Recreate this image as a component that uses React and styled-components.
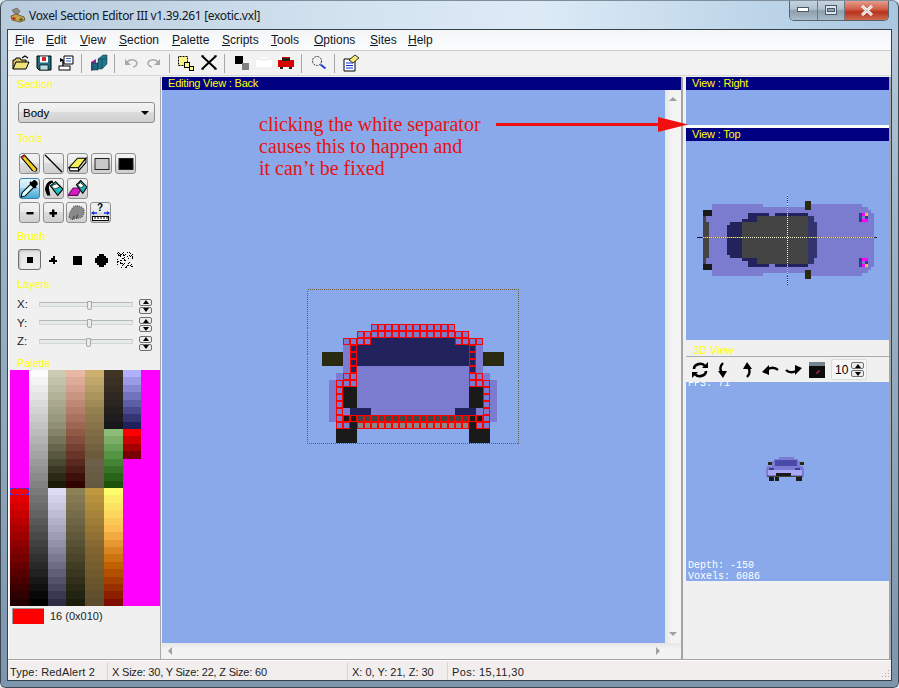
import React from 'react'
import styled, { createGlobalStyle } from 'styled-components'

const UI_FONT = '"Liberation Sans", Arial, sans-serif'

const GlobalStyle = createGlobalStyle`
html, body {
  margin: 0;
  padding: 0;
  background: #dfe6ec;
}
* { box-sizing: border-box; }
`

const Window = styled.div`
position: relative;
width: 899px;
height: 688px;
overflow: hidden;
display: flex;
flex-direction: column;
padding: 0 6px 6px 6px;
border-radius: 7px 7px 6px 6px;
border: 1px solid #3c4852;
border-top-color: #7f8e9b;
background: linear-gradient(90deg, #b7cbdd 0%, #d4e3f0 40%, #dcebf6 60%, #a9c7e0 100%);
font-family: ${UI_FONT};
font-size: 11.5px;
color: #000;
&::after {
  content: '';
  position: absolute;
  left: 0;
  right: 0;
  top: 29px;
  bottom: 0;
  background: linear-gradient(180deg, #b4c8da 0%, #9db4c8 30%, #7d95ad 100%);
  z-index: 0;
}
`

const TitleBar = styled.div`
position: relative;
z-index: 1;
height: 28px;
flex: none;
display: flex;
align-items: center;
padding-left: 3px;
gap: 3px;
`

const TitleText = styled.div`
font-family: "Noto Sans", "Open Sans", sans-serif;
font-size: 12px;
letter-spacing: -0.32px;
color: #10171e;
padding-top: 1px;
`

const WindowControls = styled.div`
position: absolute;
right: 3px;
top: -1px;
width: 100px;
height: 21px;
display: flex;
border: 1px solid #57646f;
border-top: 0;
border-radius: 0 0 5px 5px;
overflow: hidden;
`

const ControlButton = styled.div`
flex: ${p => (p.$close ? '0 0 44px' : '1')};
display: flex;
align-items: center;
justify-content: center;
border-left: ${p => (p.$first ? '0' : '1px solid #6c7a86')};
background: ${p =>
  p.$close
    ? 'linear-gradient(180deg, #e5a494 0%, #d3604a 45%, #b8321c 60%, #cf6a50 100%)'
    : 'linear-gradient(180deg, #c8d6e2 0%, #b0c0ce 45%, #8d9eac 55%, #a9bccb 100%)'};
`

const Client = styled.div`
position: relative;
z-index: 1;
flex: 1;
min-height: 0;
display: flex;
flex-direction: column;
background: #f0f0f0;
border: 1px solid #34404a;
`

const MenuBar = styled.div`
height: 21px;
flex: none;
display: flex;
align-items: center;
padding-left: 7px;
background: linear-gradient(180deg, #f4f5f7, #fbfcfd);
border-bottom: 1px solid #c9cbce;
font-size: 12px;
`

const MenuItem = styled.span`
width: ${p => p.$w}px;
flex: none;
color: #10171e;
white-space: nowrap;
u { text-underline-offset: 1px; }
`

const ToolBar = styled.div`
height: 25px;
flex: none;
display: flex;
align-items: center;
padding-left: 2px;
background: #f2f2f2;
border-bottom: 1px solid #d6d6d6;
`

const ToolIcon = styled.div`
width: 22.5px;
height: 20px;
display: flex;
align-items: center;
justify-content: center;
`

const ToolSep = styled.div`
width: 1px;
height: 19px;
margin: 0 5.5px 0 3.5px;
background: #a6a6a6;
`

const Workspace = styled.div`
flex: 1;
min-height: 0;
display: flex;
padding-top: 1px;
background: #f0f0f0;
border-bottom: 1px solid #a4a4a4;
`

const LeftPanel = styled.div`
width: 153px;
flex: none;
padding-left: 0;
border-left: 1px solid #fff;
border-right: 1px solid #a8a8a8;
display: flex;
flex-direction: column;
`

const Group = styled.div`
padding-left: 8px;
display: flex;
flex-direction: column;
`

const YellowLabel = styled.div`
height: 14px;
line-height: 14px;
color: #ffff00;
font-size: 11px;
letter-spacing: -0.1px;
margin-top: ${p => p.$mt || 0}px;
`

const SelectBox = styled.div`
width: 137px;
height: 21px;
margin: 11px 0 0 1px;
padding: 0 5px 0 4px;
display: flex;
align-items: center;
justify-content: space-between;
font-size: 11.5px;
border: 1px solid #8d8d8d;
border-radius: 3px;
background: linear-gradient(180deg, #f3f3f3 0%, #ebebeb 45%, #dcdcdc 50%, #cfcfcf 100%);
&::after {
  content: '';
  border-left: 4px solid transparent;
  border-right: 4px solid transparent;
  border-top: 4px solid #000;
}
`

const ToolGrid = styled.div`
margin: 8px 0 0 2px;
display: flex;
flex-direction: column;
gap: 3.5px;
`

const ToolRow = styled.div`
display: flex;
gap: ${p => p.$gap ?? 3}px;
`

const ToolButton = styled.div`
width: 21px;
height: 21px;
flex: none;
display: flex;
align-items: center;
justify-content: center;
border: 1px solid ${p => (p.$active ? '#3c7fb1' : '#8e8f8f')};
border-radius: 3px;
background: ${p =>
  p.$active
    ? 'linear-gradient(180deg, #e5f4fc 0%, #c4e5f6 45%, #98d1ef 50%, #3fa9cf 100%)'
    : 'linear-gradient(180deg, #f2f2f2 0%, #ebebeb 45%, #dddddd 50%, #cfcfcf 100%)'};
`

const BrushRow = styled.div`
display: flex;
align-items: center;
margin: 6px 0 0 1px;
`

const BrushItem = styled.div`
width: ${p => (p.$active ? 23 : 24)}px;
height: 21px;
display: flex;
align-items: center;
justify-content: center;
border-radius: 3px;
${p =>
  p.$active &&
  `border: 1px solid #707070;
   background: linear-gradient(180deg, #e4e4e4, #f0f0f0);
   box-shadow: inset 1px 1px 2px #bbb;`}
`

const SliderList = styled.div`
margin-top: 4px;
display: flex;
flex-direction: column;
`

const SliderRow = styled.div`
height: 18.5px;
display: flex;
align-items: center;
font-size: 11.5px;
`

const AxisName = styled.span`
width: 22px;
flex: none;
color: #222;
`

const SliderTrack = styled.div`
position: relative;
width: 94px;
height: 5px;
flex: none;
background: #e7eaea;
border: 1px solid #d0d4d4;
border-top-color: #b4b8b8;
margin-right: 6px;
`

const SliderThumb = styled.div`
position: absolute;
left: ${p => p.$at}px;
top: -2px;
width: 5px;
height: 9px;
background: #ececec;
border: 1px solid #a8a8a8;
border-radius: 1px 1px 3px 3px;
`

const Spin = styled.div`
width: 13px;
flex: none;
display: flex;
flex-direction: column;
gap: 1px;
margin-top: ${p => p.$mt || 0}px;
`

const SpinPart = styled.div`
height: 7px;
border: 1px solid #707070;
border-radius: 2px;
background: #ececec;
display: flex;
align-items: center;
justify-content: center;
&::after {
  content: '';
  border-left: 3.5px solid transparent;
  border-right: 3.5px solid transparent;
  ${p => (p.$down ? 'border-top: 4px solid #000;' : 'border-bottom: 4px solid #000;')}
}
`

const Palette = styled.div`
width: 150px;
height: 236px;
flex: none;
margin-left: 1px;
display: grid;
grid-template-rows: repeat(32, 1fr);
grid-template-columns: repeat(8, 1fr);
grid-auto-flow: column;
`

const PaletteCell = styled.div`
outline: ${p => (p.$picked ? '1px dashed #3a3aff' : 'none')};
outline-offset: -1px;
`

const ColourRow = styled.div`
display: flex;
align-items: center;
gap: 6px;
margin: 2px 0 0 3px;
font-size: 11px;
color: #222;
`

const Swatch = styled.div`
width: 32px;
height: 16px;
background: #ff0000;
border-top: 1px solid #999;
border-left: 1px solid #999;
`

const EditorPane = styled.div`
width: 521px;
flex: none;
margin-left: 1px;
display: flex;
flex-direction: column;
border-right: 2px solid #a4a4a4;
`

const ViewHeader = styled.div`
height: 13px;
flex: none;
line-height: 13px;
padding-left: 6px;
background: #000080;
color: #ffff00;
font-size: 11px;
letter-spacing: -0.2px;
`

const EditorBody = styled.div`
flex: 1;
min-height: 0;
display: flex;
`

const EditorCanvas = styled.div`
flex: 1;
display: flex;
align-items: center;
justify-content: center;
padding-right: 1px;
background: #8aa9ea;
`

const VScroll = styled.div`
width: 16px;
flex: none;
display: flex;
flex-direction: column;
justify-content: space-between;
align-items: center;
padding: 7px 0;
background: linear-gradient(90deg, #e6e6e6, #f3f3f3 40%, #f3f3f3);
`

const HScroll = styled.div`
height: 16px;
flex: none;
display: flex;
justify-content: space-between;
align-items: center;
padding: 0 21px 0 6px;
background: linear-gradient(180deg, #e6e6e6, #f3f3f3 40%, #f3f3f3);
`

const Arrow = styled.div`
width: 0;
height: 0;
${p =>
  p.$dir === 'up' && 'border-left: 4px solid transparent; border-right: 4px solid transparent; border-bottom: 4px solid #a0a0a0;'}
${p =>
  p.$dir === 'down' && 'border-left: 4px solid transparent; border-right: 4px solid transparent; border-top: 4px solid #a0a0a0;'}
${p =>
  p.$dir === 'left' && 'border-top: 4px solid transparent; border-bottom: 4px solid transparent; border-right: 4px solid #a0a0a0;'}
${p =>
  p.$dir === 'right' && 'border-top: 4px solid transparent; border-bottom: 4px solid transparent; border-left: 4px solid #a0a0a0;'}
`

const RightPanel = styled.div`
width: 205px;
flex: none;
margin-left: 3px;
display: flex;
flex-direction: column;
border-right: 2px solid #a4a4a4;
`

const BlueFill = styled.div`
height: ${p => p.$h}px;
flex: none;
background: #8aa9ea;
`

const WhiteSplit = styled.div`
height: 3px;
flex: none;
background: #fff;
`

const TopView = styled.div`
height: 199px;
flex: none;
padding: 49px 0 0 9px;
background: #8aa9ea;
`

const Label3D = styled.div`
height: 17px;
flex: none;
line-height: 20px;
padding-left: 7px;
color: #ffff00;
font-size: 11px;
border-bottom: 1px solid #aaa;
`

const Toolbar3D = styled.div`
height: 25px;
flex: none;
display: flex;
align-items: center;
padding-left: 2px;
`

const Rot = styled.div`
width: 23.5px;
display: flex;
align-items: center;
justify-content: center;
`

const CountBox = styled.div`
width: 36px;
height: 21px;
margin-left: 2px;
padding: 0 2px 0 3px;
display: flex;
align-items: center;
justify-content: space-between;
font-size: 12px;
background: #f6f6f6;
border: 1px solid #dcdcdc;
border-radius: 2px;
`

const Viewport3D = styled.div`
height: 199px;
flex: none;
display: flex;
flex-direction: column;
background: #8aa9ea;
font-family: "Liberation Mono", monospace;
font-size: 10px;
line-height: 13px;
color: #fff;
padding: 0 0 0 2px;
`

const OverlayText = styled.div`
height: 11px;
flex: none;
overflow: hidden;
`

// the GL view draws this line half under the toolbar above it
const FpsText = styled.div`
height: 7px;
flex: none;
overflow: hidden;
line-height: 11px;
& > span { display: block; margin-top: -4px; }
`

const CarHolder = styled.div`
flex: 1;
display: flex;
justify-content: center;
align-items: center;
padding: 0 7px 11px 0;
`

const StatusBar = styled.div`
height: 20px;
flex: none;
position: relative;
display: flex;
align-items: center;
background: #f1eeed;
border-top: 1px solid #fff;
font-size: 11px;
color: #222;
`

const StatusCell = styled.div`
width: ${p => p.$w}px;
height: 18px;
flex: none;
line-height: 20px;
padding-left: ${p => p.$pad ?? 4}px;
letter-spacing: ${p => p.$ls || 0}px;
border-right: ${p => (p.$last ? '0' : '1px solid #d8d6d4')};
white-space: nowrap;
overflow: hidden;
`

const Grip = styled.svg`
position: absolute;
right: 1px;
bottom: 1px;
`

const Annotation = styled.div`
position: absolute;
left: 258px;
top: 112px;
z-index: 2;
font-family: "Liberation Serif", "Times New Roman", serif;
font-size: 20px;
line-height: 22px;
color: #e81212;
white-space: nowrap;
`

const AnnotationArrow = styled.svg`
position: absolute;
left: 494px;
top: 114px;
z-index: 2;
`

// ---- data ----

const lerpHex = (a, b, t) => {
  const pa = [1, 3, 5].map(i => parseInt(a.slice(i, i + 2), 16))
  const pb = [1, 3, 5].map(i => parseInt(b.slice(i, i + 2), 16))
  return `rgb(${pa.map((v, i) => Math.round(v + (pb[i] - v) * t)).join(',')})`
}

// run of n colours through the given stops
const ramp = (n, ...stops) =>
  Array.from({ length: n }, (_, i) => {
    const pos = n === 1 ? 0 : (i / (n - 1)) * (stops.length - 1)
    const k = Math.min(Math.floor(pos), stops.length - 2)
    return lerpHex(stops[k], stops[k + 1], pos - k)
  })

const MAG = '#ff00ff'
const same = (n, c) => Array(n).fill(c)

const paletteColours = [
  ...same(16, MAG), '#ff0000', ...ramp(15, '#e40000', '#200000'),
  ...ramp(32, '#fcfcfc', '#000000'),
  ...ramp(16, '#cccbb4', '#8c8c70', '#1c1a08'), ...ramp(16, '#dcdcf4', '#8c8ca4', '#2c2c44'),
  ...ramp(16, '#e8b8a4', '#98604c', '#300400'), ...ramp(16, '#8c8058', '#1c1c0c'),
  ...ramp(12, '#ccb070', '#907c4c', '#6c5c3c'), ...ramp(4, '#6c6048', '#645840'), ...ramp(16, '#c09840', '#846630', '#5c4c2c'),
  ...ramp(8, '#403424', '#18181c'), ...ramp(8, '#8cbc78', '#4c8c3c', '#1c540c'),
  ...ramp(16, '#fcfc6c', '#fcdc60', '#fcbc50', '#e09028', '#c06000', '#a03800', '#800c00'),
  ...ramp(8, '#b0b0fc', '#6868b4', '#20205c'), ...ramp(4, '#fc0000', '#780000'), ...same(20, MAG),
  ...same(32, MAG),
]

const VOX = {
  p: '#7b7bcf',
  n: '#22225c',
  k: '#1a1a1a',
  g: '#444444',
  h: '#888888',
  m: '#2a2a10',
}

// "3.,4P,12n" => three empty, four outlined purple, twelve navy
const voxelRows = [
  '7.,12P',
  '5.,16P',
  '3.,4P,12n,4P',
  '3.,1p,1N,16n,1N,1p',
  '3m,1p,1N,16n,1N,1p,3m',
  '3m,1p,1N,16n,1N,1p,3m',
  '3.,1p,1N,16p,1N,1p',
  '2.,1p,2P,16p,2P,1p',
  '1.,1p,3P,16p,3P,1p',
  '1.,1p,1P,2k,16p,2k,1P,1p',
  '1.,1p,1P,2k,16p,2k,1P,1p',
  '1.,1p,1P,2k,16p,2k,1P,1p',
  '1.,1p,1P,1p,3n,12p,3n,1p,1P,1p',
  '1.,1p,1P,2K,16G,2K,1P,1p',
  '2.,2P,1k,16H,1k,2P',
  '2.,3k,16.,3k',
  '2.,3k,16.,3k',
]

const voxelCells = voxelRows.flatMap((row, r) => {
  let c = 0
  return row.split(',').flatMap(part => {
    const n = parseInt(part, 10)
    const code = part[part.length - 1]
    const start = c
    c += n
    if (code === '.') return []
    return Array.from({ length: n }, (_, i) => ({
      x: start + i,
      y: r,
      fill: VOX[code.toLowerCase()],
      edged: code !== code.toLowerCase(),
    }))
  })
})

// ---- drawings ----

const BackView = () => (
  <svg width="212" height="155" viewBox="0 0 212 155" shapeRendering="crispEdges">
    {voxelCells.map(v =>
      v.edged ? (
        <rect key={`${v.x}-${v.y}`} x={15.5 + v.x * 7} y={35.5 + v.y * 7} width="6" height="6" fill={v.fill} stroke="#ff0000" />
      ) : (
        <rect key={`${v.x}-${v.y}`} x={15 + v.x * 7} y={35 + v.y * 7} width="7" height="7" fill={v.fill} />
      )
    )}
    <rect x="0.5" y="0.5" width="211" height="154" fill="none" stroke="#6e5a3c" strokeDasharray="1 1" />
  </svg>
)

const TopCar = () => (
  <svg width="190" height="95" viewBox="0 0 190 95" shapeRendering="crispEdges">
    <path fill="#7b7bcf" d="M17 14H68V17H116V14H167V17H173V20H176V23H179V77H176V80H173V83H167V86H116V83H68V86H17V74H11V26H17Z" />
    <rect x="8" y="32" width="6" height="36" fill="#444" />
    <rect x="8" y="26" width="3" height="48" fill="#444" />
    <rect x="8" y="20" width="9" height="6" fill="#1a1a1a" />
    <rect x="8" y="74" width="9" height="6" fill="#1a1a1a" />
    <path fill="#22225c" d="M32 35H35V32H47V29H53V23H74V26H80V23H113V26H119V32H122V68H119V74H113V77H80V74H74V77H53V71H47V68H35V65H32Z" />
    <path fill="#33336e" d="M113 26H119V32H122V68H119V74H113Z" />
    <path fill="#444" d="M47 32H62V26H113V74H62V68H47Z" />
    <rect x="110" y="11" width="6" height="9" fill="#2a2a10" />
    <rect x="110" y="80" width="6" height="9" fill="#2a2a10" />
    <rect x="164" y="23" width="3" height="9" fill="#3a3a8a" />
    <rect x="167" y="23" width="3" height="3" fill="#ff00ff" />
    <rect x="170" y="23" width="3" height="3" fill="#f0c060" />
    <rect x="167" y="26" width="3" height="3" fill="#7b7bcf" />
    <rect x="170" y="26" width="3" height="3" fill="#3a3a8a" />
    <rect x="167" y="29" width="6" height="3" fill="#ff00ff" />
    <rect x="164" y="68" width="3" height="9" fill="#3a3a8a" />
    <rect x="167" y="68" width="6" height="3" fill="#ff00ff" />
    <rect x="167" y="71" width="3" height="3" fill="#7b7bcf" />
    <rect x="170" y="71" width="3" height="3" fill="#3a3a8a" />
    <rect x="167" y="74" width="3" height="3" fill="#ff00ff" />
    <rect x="170" y="74" width="3" height="3" fill="#f0c060" />
    <g strokeWidth="1" fill="none">
      <path d="M2 47.5H182" stroke="#14143c" />
      <path d="M8 47.5H179" stroke="#7c6c30" />
      <path d="M8 47.5H179" stroke="#ffe64e" strokeDasharray="1 1" />
      <path d="M47 47.5H113" stroke="#34402c" />
      <path d="M47 47.5H113" stroke="#f2fbd8" strokeDasharray="1 1" />
      <path d="M92.5 5V95" stroke="#14143c" />
      <path d="M92.5 5V95" stroke="#d8e8f8" strokeDasharray="1 1" />
      <path d="M92.5 14V86" stroke="#7c6c30" />
      <path d="M92.5 14V86" stroke="#ffd040" strokeDasharray="1 1" />
      <path d="M92.5 26V74" stroke="#34402c" />
      <path d="M92.5 26V74" stroke="#f0fcd0" strokeDasharray="1 1" />
    </g>
  </svg>
)

const SmallCar = () => (
  <svg width="38" height="24" viewBox="0 0 38 24" shapeRendering="crispEdges">
    <rect x="2" y="5" width="5" height="3" fill="#2a2a10" />
    <rect x="33" y="5" width="5" height="3" fill="#2a2a10" />
    <path fill="#7b7bd6" d="M13 0H28V2H32V4H34V9H37V11H38V19H0V11H1V9H6V4H8V2H13Z" />
    <path fill="#4a4aa8" d="M9 3H31V9H9Z" />
    <rect x="2" y="13" width="34" height="5" fill="#a8a8f4" />
    <rect x="3" y="11" width="5" height="2" fill="#3c3c88" />
    <rect x="29" y="11" width="5" height="2" fill="#3c3c88" />
    <rect x="10" y="16" width="15" height="3" fill="#1a1a1a" />
    <rect x="1" y="19" width="36" height="1" fill="#44443c" />
    <rect x="3" y="20" width="5" height="4" fill="#1a1a1a" />
    <rect x="9" y="20" width="4" height="4" fill="#1a1a1a" />
    <rect x="30" y="20" width="6" height="4" fill="#1a1a1a" />
  </svg>
)

const AppIcon = () => (
  <svg width="16" height="16" viewBox="0 0 16 16">
    <path d="M2 3l5-2 3 3-2 3-4-1z" fill="#8c8c80" stroke="#444" strokeWidth=".5" />
    <path d="M1 9l5-2 8 3 1 3-5 2-8-2z" fill="#c9a24a" stroke="#5a3a10" strokeWidth=".7" />
    <path d="M3 10l3 1-1 2-3-1z" fill="#b03020" />
    <path d="M9 12l3-1 1 2-3 1z" fill="#3a6a2a" />
  </svg>
)

const S = ({ children, w = 18, h = 18, vb = '0 0 18 18' }) => (
  <svg width={w} height={h} viewBox={vb}>{children}</svg>
)

const OpenIcon = () => (
  <S>
    <path d="M1 15V6h2l1-2h4l1 2h5v2" fill="#d8c46a" stroke="#000" />
    <path d="M1 15l3-7h13l-3 7z" fill="#f2e27a" stroke="#000" />
    <path d="M10 4l3-2 3 2" fill="none" stroke="#000" strokeWidth="1.2" />
  </S>
)
const SaveIcon = () => (
  <S>
    <path d="M2 2h14v14H4l-2-2z" fill="#1f6f80" stroke="#000" />
    <rect x="5" y="2.5" width="8" height="6" fill="#fff" />
    <rect x="7" y="3" width="4" height="4" fill="#d02828" />
    <rect x="5" y="11" width="8" height="5" fill="#bcd8e0" stroke="#000" strokeWidth=".6" />
  </S>
)
const ExportIcon = () => (
  <S>
    <rect x="2" y="12" width="11" height="4" fill="#fff" stroke="#000" />
    <path d="M7 2h9v8H7z" fill="#fff" stroke="#000" />
    <path d="M9 4.5h5M9 7h5" stroke="#3060c0" />
    <path d="M6 12V6" fill="none" stroke="#000" strokeWidth="1.4" />
    <path d="M3 4l4 2-4 2z" fill="#000" />
  </S>
)
const BlocksIcon = () => (
  <S>
    <path d="M1 8l5-3v10l-5 2z" fill="#a020a0" />
    <path d="M2 9h6v7H2z" fill="#1c6a80" stroke="#123" strokeWidth=".5" />
    <path d="M8 5l5-4h4v9l-5 5H8z" fill="#22788e" stroke="#123" strokeWidth=".5" />
    <path d="M12 5h5M12 5v10M8 5h4" stroke="#0f4455" fill="none" strokeWidth=".7" />
  </S>
)
const UndoIcon = ({ flip }) => (
  <S>
    <g transform={flip ? 'matrix(-1 0 0 1 18 0)' : undefined}>
      <path d="M5 8c3-3 9-3 10 1 0 2-2 4-4 4" fill="none" stroke="#a8a8a8" strokeWidth="1.5" />
      <path d="M3 5v6h6z" fill="#a8a8a8" />
    </g>
  </S>
)
const LayersIcon = () => (
  <S>
    <rect x="1.5" y="2.5" width="9" height="9" fill="#fbf38a" stroke="#000" strokeDasharray="1 .5" />
    <rect x="7.5" y="8.5" width="5" height="5" fill="#fbf38a" stroke="#000" />
    <rect x="12.5" y="12.5" width="4" height="4" fill="#fbf38a" stroke="#000" />
  </S>
)
const CrossIcon = () => (
  <S>
    <path d="M2 2l14 13M16 2L2 15" stroke="#000" strokeWidth="2" />
    <path d="M1 2h3M14 2h3M1 15h3M14 15h3" stroke="#000" />
  </S>
)
const ShadesIcon = () => (
  <S>
    <rect x="3" y="2" width="8" height="8" fill="#000" />
    <rect x="10" y="9" width="7" height="7" fill="#808080" />
  </S>
)
const CarSide = ({ body, roof }) => (
  <svg width="18" height="14" viewBox="0 0 18 14" shapeRendering="crispEdges">
    <path d="M5 1h8v3h4v7H1V4h4z" fill={body} />
    <rect x="5" y="2" width="8" height="3" fill={roof} />
    <rect x="3" y="11" width="3" height="2" fill={roof} />
    <rect x="12" y="11" width="3" height="2" fill={roof} />
  </svg>
)
const ZoomIcon = () => (
  <S>
    <circle cx="7" cy="7" r="4.5" fill="none" stroke="#333" strokeDasharray="2 1" />
    <path d="M10.5 10.5l5 4" stroke="#2040d0" strokeWidth="2" />
  </S>
)
const PropsIcon = () => (
  <S>
    <path d="M2 5h11v12H2z" fill="#fff" stroke="#000" />
    <path d="M4 9h7M4 11.5h7M4 14h7" stroke="#1030e0" />
    <path d="M7 6l6-5 4 3-6 5z" fill="#f5e878" stroke="#000" strokeWidth=".8" />
  </S>
)

const PencilIcon = () => (
  <S w={19} h={19}>
    <path d="M1 3l3-2 12 13-1 3-3-1z" fill="#f2d020" stroke="#000" />
    <path d="M1 3l3-2 1 1-3 2z" fill="#d02020" />
    <path d="M5 17h12" stroke="#bbb" />
  </S>
)
const LineIcon = () => (
  <S w={19} h={19}><path d="M1 1l16 16" stroke="#000" strokeWidth="1.2" /></S>
)
const EraserIcon = () => (
  <S w={19} h={19}>
    <path d="M1 13l8-9h8l-7 9z" fill="#f4ee58" stroke="#000" />
    <path d="M1 13h9v3H2z" fill="#fff" stroke="#000" />
    <path d="M10 13v3l7-8V4z" fill="#ddd" stroke="#000" />
  </S>
)
const RectIcon = ({ fill }) => (
  <S><rect x="2" y="3.5" width="14" height="11" fill={fill} stroke="#222" /></S>
)
const DropperIcon = () => (
  <S w={19} h={19}>
    <path d="M1 17l1-4 8-8 3 3-8 8z" fill="#dff" stroke="#000" />
    <path d="M11 3l2-2c2 0 4 2 4 4l-2 2 1 1-2 1-5-5 1-2z" fill="#000" />
  </S>
)
const BucketIcon = () => (
  <S w={20} h={20}>
    <path d="M1 11c0-5 3-9 7-9l1 2c-3 0-5 3-4 7l1 5H3z" fill="#000" />
    <path d="M6 7l5-4 7 7-5 6z" fill="#20c0c0" stroke="#000" />
    <path d="M7 7l5-2 3 3-5 2z" fill="#fff" stroke="#000" strokeWidth=".6" />
  </S>
)
const EraseFillIcon = () => (
  <S w={20} h={20}>
    <path d="M0 16l5-7h8l-4 7z" fill="#d020c0" stroke="#6a0a60" />
    <path d="M8 6l4-4 6 6-4 6z" fill="#20b0b0" stroke="#000" />
    <path d="M9 6l3-2 3 3-3 2z" fill="#fff" stroke="#000" strokeWidth=".6" />
  </S>
)
const MinusIcon = () => (
  <S><rect x="5.5" y="8" width="7" height="2.4" /></S>
)
const PlusIcon = () => (
  <S><path d="M8 5.5h2.4V8H13v2.4h-2.6V13H8v-2.6H5.5V8H8z" /></S>
)
const BlobIcon = () => (
  <S w={19} h={19}>
    <path d="M2 13c0-3 2-8 5-10 3-1 7 0 9 3 1 3-1 7-3 8-3 1-4 0-6 1-2 1-4 1-5-2z" fill="#8a8a8a" stroke="#555" strokeDasharray="1 1" />
    <path d="M5 16l2-4M9 15l1-4" stroke="#444" />
  </S>
)
const RulerIcon = () => (
  <svg width="19" height="19" viewBox="0 0 19 19">
    <text x="6" y="8" fontFamily="Liberation Sans, sans-serif" fontWeight="700" fontSize="10">?</text>
    <path d="M1 10h5M13 10h5" stroke="#1030f0" strokeWidth="1.4" />
    <path d="M0 10l3-2v4zM19 10l-3-2v4z" fill="#1030f0" />
    <rect x="1.5" y="13.5" width="16" height="4" fill="#fff" stroke="#000" />
    <path d="M4 14v2M7 14v2M10 14v2M13 14v2M16 14v2" stroke="#000" />
  </svg>
)

const DotIcon = ({ size }) => (
  <svg width="16" height="16" viewBox="0 0 16 16" shapeRendering="crispEdges">
    <rect x={8 - size / 2} y={8 - size / 2} width={size} height={size} />
  </svg>
)
const DiamondIcon = ({ size, arm }) => (
  <svg width="16" height="16" viewBox="0 0 16 16" shapeRendering="crispEdges">
    <rect x={8 - size / 2} y={8 - size / 2} width={size} height={size} />
    <rect x={8 - size / 2 + arm} y={8 - size / 2 - arm} width={Math.max(size - arm * 2, 2)} height={size + arm * 2} />
    <rect x={8 - size / 2 - arm} y={8 - size / 2 + arm} width={size + arm * 2} height={Math.max(size - arm * 2, 2)} />
  </svg>
)

// scatter for the spray brush, fixed seed so it draws the same each time
const sprayDots = (() => {
  let s = 97
  const dots = []
  for (let i = 0; i < 62; i++) {
    s = (s * 137 + 59) % 1009
    const x = s % 16
    s = (s * 137 + 59) % 1009
    dots.push({ x, y: s % 16 })
  }
  return dots
})()
const SprayIcon = () => (
  <svg width="16" height="16" viewBox="0 0 16 16" shapeRendering="crispEdges">
    {sprayDots.map((d, i) => (
      <rect key={i} x={d.x} y={d.y} width="1" height="1" />
    ))}
  </svg>
)

const RotateFull = () => (
  <S>
    <path d="M3 8c0-5 8-7 11-3" fill="none" stroke="#000" strokeWidth="2.6" />
    <path d="M11 7h6V1z" />
    <path d="M15 10c0 5-8 7-11 3" fill="none" stroke="#000" strokeWidth="2.6" />
    <path d="M7 11H1v6z" />
  </S>
)
const RotateSide = ({ flip }) => (
  <S>
    <g transform={flip ? 'matrix(-1 0 0 -1 18 18)' : undefined}>
      <path d="M9 2C6 5 6 9 8 12" fill="none" stroke="#000" strokeWidth="2.4" />
      <path d="M4 10h9l-4 7z" />
    </g>
  </S>
)
const RotateFlat = ({ flip }) => (
  <S>
    <g transform={flip ? 'matrix(-1 0 0 -1 18 18)' : undefined}>
      <path d="M6 9c3-3 8-3 11 0" fill="none" stroke="#000" strokeWidth="2.4" />
      <path d="M8 4v10L1 11z" />
    </g>
  </S>
)
const SceneIcon = () => (
  <svg width="16" height="16" viewBox="0 0 16 16" shapeRendering="crispEdges">
    <rect width="16" height="16" fill="#0c0c0c" />
    <rect width="16" height="4" fill="#77838c" />
    <path d="M6 11l4-3 2 1-4 3z" fill="#7a2030" />
  </svg>
)

const menus = [
  ['F', 'ile', 31], ['E', 'dit', 34], ['V', 'iew', 39], ['S', 'ection', 53], ['P', 'alette', 50],
  ['S', 'cripts', 49], ['T', 'ools', 43], ['O', 'ptions', 56], ['S', 'ites', 38], ['H', 'elp', 30],
]

const sliders = [
  ['X:', 47],
  ['Y:', 47],
  ['Z:', 46],
]

const App = () => (
  <>
    <GlobalStyle />
    <Window>
      <TitleBar>
        <AppIcon />
        <TitleText>Voxel Section Editor III v1.39.261 [exotic.vxl]</TitleText>
        <WindowControls>
          <ControlButton $first>
            <svg width="12" height="6"><rect x="0.5" y="0.5" width="11" height="4" fill="#fff" stroke="#4b5a66" /></svg>
          </ControlButton>
          <ControlButton>
            <svg width="12" height="10"><rect x="0.5" y="0.5" width="11" height="9" fill="#dde6ee" stroke="#4b5a66" /><rect x="2.5" y="3.5" width="7" height="3" fill="#8fa2b2" stroke="#4b5a66" /></svg>
          </ControlButton>
          <ControlButton $close>
            <svg width="14" height="11"><path d="M2 1l10 9M12 1L2 10" stroke="#fff" strokeWidth="3" /><path d="M2 1l10 9M12 1L2 10" stroke="#8a8070" strokeWidth=".5" /></svg>
          </ControlButton>
        </WindowControls>
      </TitleBar>
      <Client>
        <MenuBar>
          {menus.map(([first, rest, w]) => (
            <MenuItem key={first + rest} $w={w}><u>{first}</u>{rest}</MenuItem>
          ))}
        </MenuBar>
        <ToolBar>
          <ToolIcon><OpenIcon /></ToolIcon>
          <ToolIcon><SaveIcon /></ToolIcon>
          <ToolIcon><ExportIcon /></ToolIcon>
          <ToolSep />
          <ToolIcon><BlocksIcon /></ToolIcon>
          <ToolSep />
          <ToolIcon><UndoIcon /></ToolIcon>
          <ToolIcon><UndoIcon flip /></ToolIcon>
          <ToolSep />
          <ToolIcon><LayersIcon /></ToolIcon>
          <ToolIcon><CrossIcon /></ToolIcon>
          <ToolSep />
          <ToolIcon><ShadesIcon /></ToolIcon>
          <ToolIcon><CarSide body="#ffffff" roof="#f4f4f4" /></ToolIcon>
          <ToolIcon><CarSide body="#d80000" roof="#222" /></ToolIcon>
          <ToolSep />
          <ToolIcon><ZoomIcon /></ToolIcon>
          <ToolSep />
          <ToolIcon><PropsIcon /></ToolIcon>
        </ToolBar>
        <Workspace>
          <LeftPanel>
            <Group>
              <YellowLabel>Section</YellowLabel>
              <SelectBox>Body</SelectBox>
              <YellowLabel $mt={8}>Tools</YellowLabel>
              <ToolGrid>
                <ToolRow>
                  <ToolButton><PencilIcon /></ToolButton>
                  <ToolButton><LineIcon /></ToolButton>
                  <ToolButton><EraserIcon /></ToolButton>
                  <ToolButton><RectIcon fill="#c8c8c8" /></ToolButton>
                  <ToolButton><RectIcon fill="#000" /></ToolButton>
                </ToolRow>
                <ToolRow>
                  <ToolButton $active><DropperIcon /></ToolButton>
                  <ToolButton><BucketIcon /></ToolButton>
                  <ToolButton><EraseFillIcon /></ToolButton>
                </ToolRow>
                <ToolRow $gap={2.5}>
                  <ToolButton><MinusIcon /></ToolButton>
                  <ToolButton><PlusIcon /></ToolButton>
                  <ToolButton><BlobIcon /></ToolButton>
                  <ToolButton><RulerIcon /></ToolButton>
                </ToolRow>
              </ToolGrid>
              <YellowLabel $mt={6}>Brush</YellowLabel>
              <BrushRow>
                <BrushItem $active><DotIcon size={6} /></BrushItem>
                <BrushItem><DiamondIcon size={4} arm={2} /></BrushItem>
                <BrushItem><DotIcon size={9} /></BrushItem>
                <BrushItem><DiamondIcon size={9} arm={2} /></BrushItem>
                <BrushItem><SprayIcon /></BrushItem>
              </BrushRow>
              <YellowLabel $mt={7}>Layers</YellowLabel>
              <SliderList>
                {sliders.map(([axis, at]) => (
                  <SliderRow key={axis}>
                    <AxisName>{axis}</AxisName>
                    <SliderTrack><SliderThumb $at={at} /></SliderTrack>
                    <Spin $mt={4}><SpinPart /><SpinPart $down /></Spin>
                  </SliderRow>
                ))}
              </SliderList>
              <YellowLabel $mt={5.5}>Palette</YellowLabel>
            </Group>
            <Palette>
              {paletteColours.map((c, i) => (
                <PaletteCell key={i} $picked={i === 16} style={{ background: c }} />
              ))}
            </Palette>
            <ColourRow>
              <Swatch />
              16 (0x010)
            </ColourRow>
          </LeftPanel>
          <EditorPane>
            <ViewHeader>Editing View : Back</ViewHeader>
            <EditorBody>
              <EditorCanvas><BackView /></EditorCanvas>
              <VScroll><Arrow $dir="up" /><Arrow $dir="down" /></VScroll>
            </EditorBody>
            <HScroll><Arrow $dir="left" /><Arrow $dir="right" /></HScroll>
          </EditorPane>
          <RightPanel>
            <ViewHeader>View : Right</ViewHeader>
            <BlueFill $h={35} />
            <WhiteSplit />
            <ViewHeader>View : Top</ViewHeader>
            <TopView><TopCar /></TopView>
            <Label3D>3D View</Label3D>
            <Toolbar3D>
              <Rot><RotateFull /></Rot>
              <Rot><RotateSide /></Rot>
              <Rot><RotateSide flip /></Rot>
              <Rot><RotateFlat /></Rot>
              <Rot><RotateFlat flip /></Rot>
              <Rot><SceneIcon /></Rot>
              <CountBox>10<Spin><SpinPart /><SpinPart $down /></Spin></CountBox>
            </Toolbar3D>
            <Viewport3D>
              <FpsText><span>FPS: 71</span></FpsText>
              <CarHolder><SmallCar /></CarHolder>
              <OverlayText>Depth: -150</OverlayText>
              <OverlayText>Voxels: 6086</OverlayText>
            </Viewport3D>
          </RightPanel>
        </Workspace>
        <StatusBar>
          <StatusCell $w={100} $pad={2} $ls={0.2}>Type: RedAlert 2</StatusCell>
          <StatusCell $w={240} $ls={-0.2}>X Size: 30, Y Size: 22, Z Size: 60</StatusCell>
          <StatusCell $w={100}>X: 0, Y: 21, Z: 30</StatusCell>
          <StatusCell $w={200} $ls={0.4} $last>Pos: 15,11,30</StatusCell>
          <Grip width="10" height="10" viewBox="0 0 10 10">
            <path d="M8 1h1v1H8zM5 4h1v1H5zM8 4h1v1H8zM2 7h1v1H2zM5 7h1v1H5zM8 7h1v1H8z" fill="#a8a8a8" />
          </Grip>
        </StatusBar>
      </Client>
      <Annotation>
        clicking the white separator<br />
        causes this to happen and<br />
        it can’t be fixed
      </Annotation>
      <AnnotationArrow width="194" height="20" viewBox="0 0 194 20">
        <rect x="1" y="8" width="165" height="3" fill="#f01010" />
        <path d="M163 2l30 7.5L163 17z" fill="#f01010" />
      </AnnotationArrow>
    </Window>
  </>
)

export default App
